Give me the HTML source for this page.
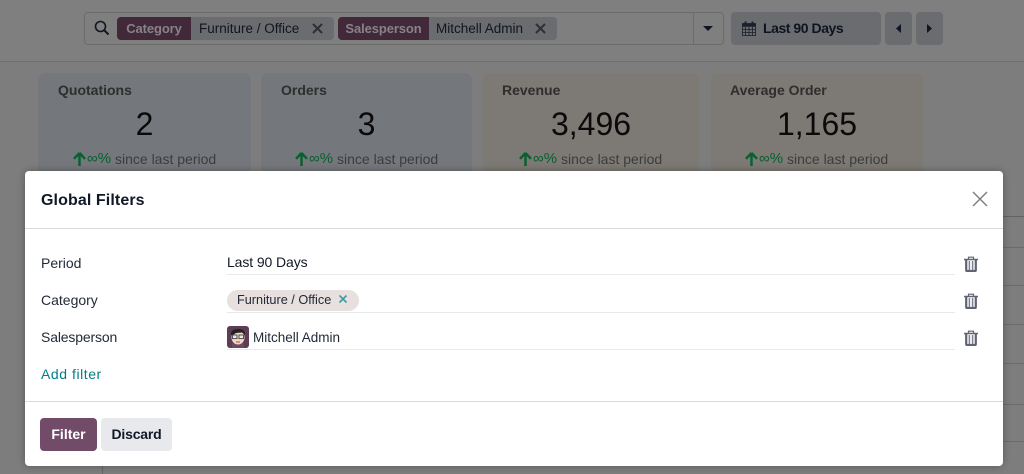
<!DOCTYPE html>
<html><head><meta charset="utf-8">
<style>
html,body{margin:0;padding:0}
body{width:1024px;height:474px;overflow:hidden;position:relative;background:#7d7d7d;font-family:"Liberation Sans","DejaVu Sans",sans-serif;color:#111827}
.a{position:absolute;white-space:nowrap}
.card{position:absolute;top:73px;height:110px;border-radius:7px}
.card b{position:absolute;left:20px;top:9px;font-size:14px;line-height:16px;color:#2e2e2e}
.card .v{position:absolute;left:0;right:0;top:31px;text-align:center;font-size:32px;line-height:40px;color:#0a0a0a}
.ln{position:absolute;left:1003px;width:21px;height:1px;background:#6b6b6b}
.lab{position:absolute;left:41px;font-size:14px;line-height:20px;color:#1f2937}
.ul{position:absolute;left:227px;width:728px;height:1px;background:#e7e9ed}
.fac{position:absolute;top:17px;height:23px;background:#6a6c70;border-radius:4px}
.fac .k{position:absolute;left:0;top:0;height:23px;background:#41293a;border-radius:4px 0 0 4px;color:#888289;font-weight:700;font-size:13px;line-height:23px;text-align:center;letter-spacing:-.1px}
.fac .t{position:absolute;top:0;font-size:13.5px;line-height:23px;color:#10151f;white-space:nowrap}
.btn{position:absolute;background:#6a6c70;border-radius:4px}
.g{position:absolute;top:150px;font-size:15px;line-height:18px;color:#06602f;white-space:nowrap}
.d{position:absolute;top:150px;font-size:14px;line-height:18px;color:#3c3c3c;white-space:nowrap}
</style></head>
<body>
<!-- page backdrop -->
<div class="a" style="left:0;top:0;width:1024px;height:61px;background:#7f7f7f;border-bottom:1px solid #6f6f6f"></div>
<div class="a" style="left:102px;top:466px;width:1px;height:8px;background:#666"></div>
<div class="ln" style="top:216px;background:#626262"></div>
<div class="ln" style="top:247px"></div>
<div class="ln" style="top:285px"></div>
<div class="ln" style="top:324px"></div>
<div class="ln" style="top:363px"></div>
<div class="ln" style="top:404px"></div>
<div class="ln" style="top:441px"></div>

<!-- search -->
<div class="a" style="left:84px;top:12px;width:638px;height:31px;border:1px solid #6b6b6b;border-radius:4px;box-sizing:content-box"></div>
<div class="a" style="left:693px;top:12px;width:1px;height:33px;background:#6b6b6b"></div>
<svg class="a" style="left:94px;top:20px" width="16" height="16" viewBox="0 0 16 16" fill="none" stroke="#10151f" stroke-width="1.6"><circle cx="6.5" cy="6.5" r="5"/><path d="M10.2 10.2L14.5 14.5" stroke-width="2"/></svg>
<div class="fac" style="left:117px;width:217px">
 <div class="k" style="width:74px">Category</div>
 <div class="t" style="left:82px">Furniture / Office</div>
 <svg class="a" style="left:195px;top:6px" width="11" height="11" viewBox="0 0 11 11" stroke="#2c2f36" stroke-width="2"><path d="M1 1L10 10M10 1L1 10"/></svg>
</div>
<div class="fac" style="left:338px;width:219px">
 <div class="k" style="width:91px">Salesperson</div>
 <div class="t" style="left:98px">Mitchell Admin</div>
 <svg class="a" style="left:197px;top:6px" width="11" height="11" viewBox="0 0 11 11" stroke="#2c2f36" stroke-width="2"><path d="M1 1L10 10M10 1L1 10"/></svg>
</div>
<svg class="a" style="left:703px;top:26px" width="10" height="5" viewBox="0 0 10 5"><path d="M0 0H10L5 5Z" fill="#0e1420"/></svg>

<!-- period -->
<div class="btn" style="left:731px;top:12px;width:150px;height:33px"></div>
<svg class="a" style="left:742px;top:21px" width="14" height="15" viewBox="0 0 14 15" fill="none" stroke="#1a202c" stroke-width=".8"><rect x=".5" y="2.5" width="13" height="12"/><path d="M.5 5.5H13.5M.5 8.5H13.5M.5 11.5H13.5M3.5 5.5V14.5M7 5.5V14.5M10.5 5.5V14.5"/><path d="M3.5 .5V3.5M10.5 .5V3.5" stroke-width="2"/><rect x="0" y="2.5" width="14" height="2.5" fill="#1a202c" stroke="none"/></svg>
<div class="a" style="left:763px;top:19px;font-size:14px;line-height:18px;font-weight:700;color:#0e1420;letter-spacing:-.45px">Last 90 Days</div>
<div class="btn" style="left:885px;top:12px;width:27px;height:33px"></div>
<div class="btn" style="left:916px;top:12px;width:27px;height:33px"></div>
<svg class="a" style="left:896px;top:24px" width="5" height="9" viewBox="0 0 5 9"><path d="M5 0V9L0 4.5Z" fill="#0e1420"/></svg>
<svg class="a" style="left:927px;top:24px" width="5" height="9" viewBox="0 0 5 9"><path d="M0 0V9L5 4.5Z" fill="#0e1420"/></svg>

<!-- cards -->
<div class="card" style="left:38px;width:213px;background:#74777b"><b>Quotations</b><div class="v">2</div></div>
<div class="card" style="left:261px;width:211px;background:#74777b"><b style="left:20px">Orders</b><div class="v">3</div></div>
<div class="card" style="left:483px;width:216px;background:#7d7974"><b style="left:19px">Revenue</b><div class="v">3,496</div></div>
<div class="card" style="left:711px;width:212px;background:#7d7974"><b style="left:19px">Average Order</b><div class="v">1,165</div></div>

<!-- since last period rows -->
<svg class="a" style="left:73px;top:152px" width="13" height="14" viewBox="0 0 13 14"><path d="M6.5 1L1 6.8M6.5 1L12 6.8M6.5 1V14" stroke="#06602f" stroke-width="2.4" fill="none"/></svg>
<div class="g" style="left:87px">∞%</div>
<div class="d" style="left:115px">since last period</div>

<svg class="a" style="left:295px;top:152px" width="13" height="14" viewBox="0 0 13 14"><path d="M6.5 1L1 6.8M6.5 1L12 6.8M6.5 1V14" stroke="#06602f" stroke-width="2.4" fill="none"/></svg>
<div class="g" style="left:309px">∞%</div>
<div class="d" style="left:337px">since last period</div>

<svg class="a" style="left:519px;top:152px" width="13" height="14" viewBox="0 0 13 14"><path d="M6.5 1L1 6.8M6.5 1L12 6.8M6.5 1V14" stroke="#06602f" stroke-width="2.4" fill="none"/></svg>
<div class="g" style="left:533px">∞%</div>
<div class="d" style="left:561px">since last period</div>

<svg class="a" style="left:745px;top:152px" width="13" height="14" viewBox="0 0 13 14"><path d="M6.5 1L1 6.8M6.5 1L12 6.8M6.5 1V14" stroke="#06602f" stroke-width="2.4" fill="none"/></svg>
<div class="g" style="left:759px">∞%</div>
<div class="d" style="left:787px">since last period</div>

<!-- modal -->
<div class="a" style="left:25px;top:171px;width:978px;height:295px;background:#fff;border-radius:4px;box-shadow:0 0 8px rgba(0,0,0,.3)"></div>
<div class="a" style="left:25px;top:228px;width:978px;height:1px;background:#d8dadd"></div>
<div class="a" style="left:25px;top:401px;width:978px;height:1px;background:#d8dadd"></div>
<div class="a" style="left:41px;top:191px;font-size:16px;line-height:20px;font-weight:700;color:#111827;letter-spacing:.1px">Global Filters</div>
<svg class="a" style="left:972px;top:191px" width="16" height="16" viewBox="0 0 16 16" stroke="#808080" stroke-width="1.5"><path d="M1 1L15 15M15 1L1 15"/></svg>

<div class="lab" style="top:253px">Period</div>
<div class="lab" style="top:290px">Category</div>
<div class="lab" style="top:327px;letter-spacing:-.15px">Salesperson</div>
<div class="lab" style="top:364px;color:#017e84;letter-spacing:.55px">Add filter</div>

<div class="a" style="left:227px;top:252px;font-size:14px;line-height:20px;color:#111827;letter-spacing:-.1px">Last 90 Days</div>
<div class="ul" style="top:274px"></div>
<div class="a" style="left:227px;top:290px;width:132px;height:21px;background:#e7e0df;border-radius:11px"></div>
<div class="a" style="left:237px;top:291px;font-size:12.7px;line-height:18px;color:#222a36">Furniture / Office</div>
<svg class="a" style="left:338px;top:294px" width="10" height="10" viewBox="0 0 10 10" stroke="#3a9ea2" stroke-width="1.6"><path d="M1.5 1.5L8.5 8.5M8.5 1.5L1.5 8.5"/></svg>
<div class="ul" style="top:312px"></div>

<svg class="a" style="left:227px;top:326px" width="22" height="22" viewBox="0 0 22 22">
<rect width="22" height="22" rx="3" fill="#5d3d55"/>
<path d="M5 22V19C5 16 8 15 11 15S17 16 17 19V22Z" fill="#6a4a60"/>
<ellipse cx="11" cy="11.5" rx="6.5" ry="7" fill="#f3d3c3"/>
<path d="M4 9C3.5 4 8 2.5 12 3C16 3 18.5 5.5 18 9L15 6.5L9 7L6 9Z" fill="#222"/>
<g fill="#e8e8e8" stroke="#444" stroke-width=".9"><rect x="5.5" y="9" width="4.5" height="3.6"/><rect x="12" y="9" width="4.5" height="3.6"/></g>
<path d="M9 16H13" stroke="#a4524e" stroke-width="1"/>
</svg>
<div class="a" style="left:253px;top:328px;font-size:13.5px;line-height:20px;color:#1f2937">Mitchell Admin</div>
<div class="ul" style="top:349px"></div>

<svg class="a" style="left:964px;top:256px" width="14" height="16" viewBox="0 0 14 16" fill="none" stroke="#5f6474"><path d="M0 3.5H14" stroke-width="1.5"/><path d="M4.5 3V1.2H9.5V3" stroke-width="1.2"/><path d="M2.2 4V14.2C2.2 15 2.6 15 3.2 15H10.8C11.4 15 11.8 15 11.8 14.2V4" stroke-width="2.2"/><path d="M5.4 5V14M8.6 5V14" stroke-width="1.5" stroke="#7d8190"/></svg>
<svg class="a" style="left:964px;top:293px" width="14" height="16" viewBox="0 0 14 16" fill="none" stroke="#5f6474"><path d="M0 3.5H14" stroke-width="1.5"/><path d="M4.5 3V1.2H9.5V3" stroke-width="1.2"/><path d="M2.2 4V14.2C2.2 15 2.6 15 3.2 15H10.8C11.4 15 11.8 15 11.8 14.2V4" stroke-width="2.2"/><path d="M5.4 5V14M8.6 5V14" stroke-width="1.5" stroke="#7d8190"/></svg>
<svg class="a" style="left:964px;top:330px" width="14" height="16" viewBox="0 0 14 16" fill="none" stroke="#5f6474"><path d="M0 3.5H14" stroke-width="1.5"/><path d="M4.5 3V1.2H9.5V3" stroke-width="1.2"/><path d="M2.2 4V14.2C2.2 15 2.6 15 3.2 15H10.8C11.4 15 11.8 15 11.8 14.2V4" stroke-width="2.2"/><path d="M5.4 5V14M8.6 5V14" stroke-width="1.5" stroke="#7d8190"/></svg>

<div class="a" style="left:40px;top:418px;width:57px;height:33px;background:#714b67;border-radius:4px;color:#fff;font-size:14px;font-weight:700;line-height:33px;text-align:center">Filter</div>
<div class="a" style="left:101px;top:418px;width:71px;height:33px;background:#e7e9ed;border-radius:4px;color:#111827;font-size:14px;font-weight:700;line-height:33px;text-align:center;letter-spacing:-.2px">Discard</div>
</body></html>
